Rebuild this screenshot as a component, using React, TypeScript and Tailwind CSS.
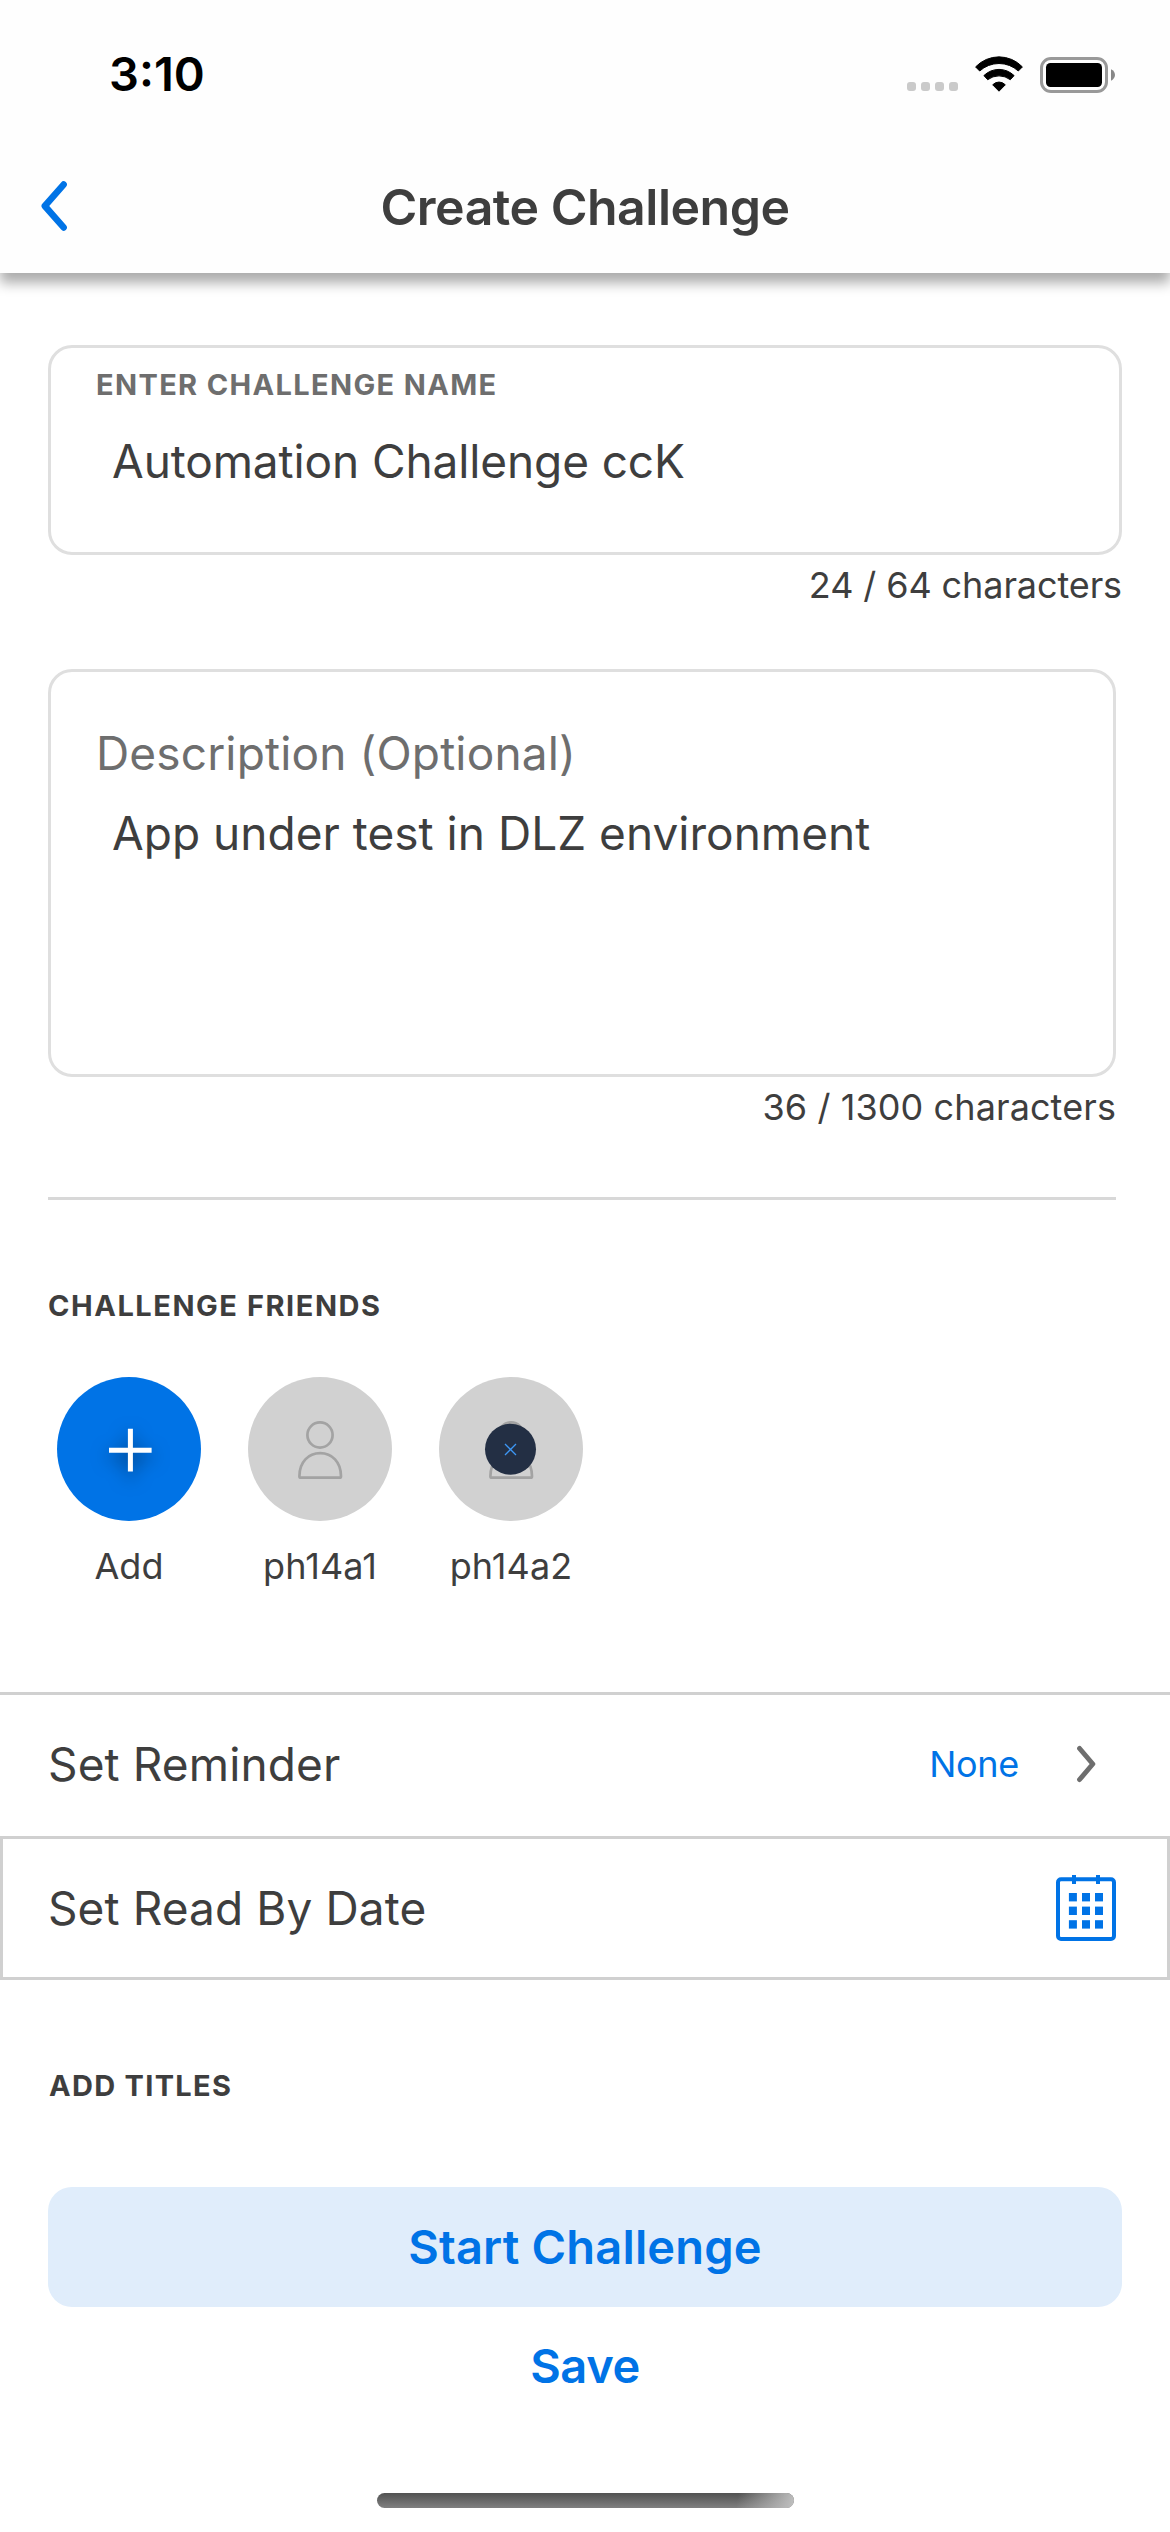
import type { ReactNode } from "react";

function StatusIcons() {
  return (
    <div className="flex items-end">
      <div className="mb-[2px] flex gap-[5px]">
        <span className="size-[9px] rounded-[3px] bg-[#cacaca]" />
        <span className="size-[9px] rounded-[3px] bg-[#cacaca]" />
        <span className="size-[9px] rounded-[3px] bg-[#cacaca]" />
        <span className="size-[9px] rounded-[3px] bg-[#cacaca]" />
      </div>
      <svg className="mb-px ml-[17px] h-9 w-12" viewBox="0 0 48 36" fill="#000" stroke="#000" strokeWidth="1" strokeLinejoin="round">
        <path d="M.6 10.9A32.3 32.3 0 0 1 47.4 10.9L43.3 15A28.6 28.6 0 0 0 4.7 15Z" />
        <path d="M8.9 19.6A21.5 21.5 0 0 1 39.1 19.6L35.3 23.7A18.6 18.6 0 0 0 12.7 23.7Z" />
        <path d="M17.7 28.8A8.6 8.6 0 0 1 30.3 28.8L24 35.2Z" />
      </svg>
      <svg className="ml-[17px] h-9 w-[76px]" viewBox="0 0 76 36">
        <rect x="1.5" y="1.5" width="65" height="33" rx="9.5" fill="none" stroke="#999" strokeWidth="3" />
        <rect x="6" y="6" width="56" height="24" rx="4.5" fill="#000" />
        <path d="M71 12.3C73.4 13.4 75 15.6 75 18S73.4 22.6 71 23.7Z" fill="#888" />
      </svg>
    </div>
  );
}

function CalendarIcon() {
  const cols = [12.9, 26, 39];
  const rows = [18, 31.6, 45.2];
  return (
    <svg className="h-[66px] w-[60px]" viewBox="0 0 60 66" fill="#0073e6">
      <rect x="2" y="4.3" width="56" height="59.7" rx="3" fill="none" stroke="#0073e6" strokeWidth="4" />
      <rect x="16" y="0" width="4" height="9" />
      <rect x="40" y="0" width="4" height="9" />
      {rows.map((y) => cols.map((x) => <rect key={`${x}-${y}`} x={x} y={y} width="8" height="8.4" />))}
    </svg>
  );
}

function Person() {
  return (
    <g fill="none" stroke="#a3a3a3" strokeWidth="2.7">
      <circle cx="72" cy="58" r="12.6" />
      <path d="M51.4 99.2C51.4 85 60.4 76.2 72.2 76.2S93 85 93 99.2Q93 100.7 91.5 100.7H52.9Q51.4 100.7 51.4 99.2Z" />
    </g>
  );
}

function Friend({ name, className, children }: { name: string; className: string; children: ReactNode }) {
  return (
    <div className="flex w-36 flex-col items-center">
      <div className={`size-36 rounded-full ${className}`}>
        <svg className="size-36" viewBox="0 0 144 144">
          {children}
        </svg>
      </div>
      <span className="mt-[23px] text-[36px] leading-[44px] tracking-[0.1px]">{name}</span>
    </div>
  );
}

export default function App() {
  return (
    <div className="flex h-[2532px] w-[1170px] flex-col overflow-hidden bg-white font-[Inter,sans-serif] text-[#3e3e3e]">
      <header className="shrink-0 bg-[#fefefe] shadow-[0_10px_12px_rgba(0,0,0,0.33)]">
        <div className="flex h-[141px] items-center justify-between pt-[7px] pr-[54px] pl-[109px]">
          <span className="text-[47px] leading-[60px] font-semibold text-black">3:10</span>
          <StatusIcons />
        </div>
        <div className="grid h-[132px] grid-cols-[1fr_auto_1fr] items-center">
          <svg className="ml-10 h-[52px] w-7" viewBox="0 0 28 52" fill="none" stroke="#0073e6" strokeWidth="6.6" strokeLinecap="round" strokeLinejoin="round">
            <path d="M23.6 3.6L4.8 25L23.6 46.4" />
          </svg>
          <h1 className="text-[50px] leading-[60px] font-semibold tracking-[-0.5px]">Create Challenge</h1>
        </div>
      </header>

      <main className="flex flex-col">
        <section className="mt-[72px] flex flex-col px-12">
          <div className="flex h-[210px] flex-col rounded-3xl border-[3px] border-[#dfdfdf] pt-[21px] pl-[45px]">
            <label className="text-[29px] leading-[31px] font-bold tracking-[1.35px] text-[#6e6e6e]">ENTER CHALLENGE NAME</label>
            <p className="mt-[31px] pl-4 text-[46px] leading-[60px] tracking-[-0.11px]">Automation Challenge ccK</p>
          </div>
          <p className="mt-2 text-right text-[36px] leading-[44px] tracking-[-0.1px]">24 / 64 characters</p>
        </section>

        <section className="mt-[62px] mr-[54px] ml-12 flex flex-col">
          <div className="flex h-[408px] flex-col rounded-3xl border-[3px] border-[#dfdfdf] pt-[51px] pl-[45px]">
            <label className="text-[46px] leading-[60px] tracking-[0.15px] text-[#6e6e6e]">Description (Optional)</label>
            <p className="mt-5 pl-4 text-[46px] leading-[60px] tracking-[0.02px]">App under test in DLZ environment</p>
          </div>
          <p className="mt-2 text-right text-[36px] leading-[44px] tracking-[0.1px]">36 / 1300 characters</p>
          <hr className="mt-[68px] h-[3px] border-0 bg-[#d8d8d8]" />
        </section>

        <section className="mt-[91px] px-12">
          <h2 className="text-[29px] leading-[30px] font-bold tracking-[1.54px]">CHALLENGE FRIENDS</h2>
          <div className="mt-14 flex gap-[47px] pl-[9px]">
            <Friend name="Add" className="bg-[#0073e6]">
              <path className="drop-shadow-[0_6px_9px_rgba(0,0,0,0.5)]" d="M73.4 51.8V94.6M52 73.2H94.6" fill="none" stroke="#fff" strokeWidth="5" />
            </Friend>
            <Friend name="ph14a1" className="bg-[#d1d1d1]">
              <Person />
            </Friend>
            <Friend name="ph14a2" className="bg-[#d1d1d1]">
              <Person />
              <circle cx="71.5" cy="72.2" r="25.5" fill="#232f44" />
              <path d="M66 67L77 78M77 67L66 78" stroke="#3d97f5" strokeWidth="1.3" />
            </Friend>
          </div>
        </section>

        <section className="mt-[104px]">
          <div className="flex h-36 items-center border-t-[3px] border-[#d0d0d0] pr-[73px] pb-1 pl-12">
            <span className="flex-1 text-[46px] leading-[60px] tracking-[0.12px]">Set Reminder</span>
            <span className="text-[36px] leading-[44px] tracking-[-0.3px] text-[#0073e6]">None</span>
            <svg className="ml-[56px] h-[38px] w-[22px]" viewBox="0 0 22 38" fill="none" stroke="#6e6e6e" strokeWidth="5" strokeLinecap="round" strokeLinejoin="round">
              <path d="M4.6 3.5L17.8 19L4.6 34.5" />
            </svg>
          </div>
          <div className="flex h-36 items-center justify-between border-[3px] border-[#d0d0d0] pr-[51px] pl-[45px]">
            <span className="text-[46px] leading-[60px] tracking-[0.1px]">Set Read By Date</span>
            <CalendarIcon />
          </div>
        </section>

        <section className="mt-[91px] flex flex-col px-12">
          <h2 className="pl-px text-[29px] leading-[30px] font-bold tracking-[1.3px]">ADD TITLES</h2>
          <button className="mt-[86px] h-[120px] rounded-3xl bg-[#e0edfb] text-[47px] leading-[60px] font-semibold tracking-[0.16px] text-[#0073e6]">
            Start Challenge
          </button>
          <button className="h-[120px] pb-[2px] text-[47px] leading-[60px] font-semibold tracking-[-0.4px] text-[#0073e6]">Save</button>
        </section>
      </main>

      <div className="mt-[66px] flex justify-center">
        <div className="h-[15px] w-[417px] overflow-hidden rounded-full bg-linear-to-b from-[#525252] to-[#808080]">
          <div className="ml-auto h-full w-[70px] bg-[linear-gradient(100deg,transparent_20%,#c0c0c0_100%)]" />
        </div>
      </div>
    </div>
  );
}
